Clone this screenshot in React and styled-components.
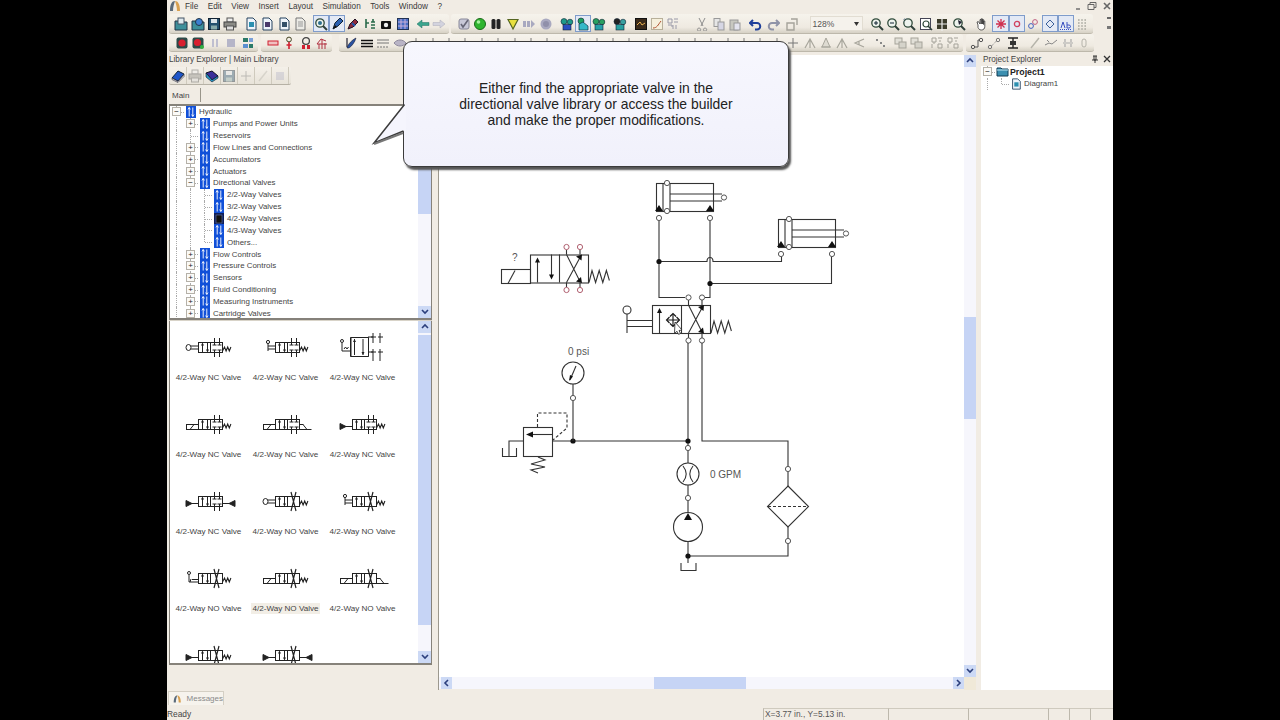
import React from "react";
import styled, { createGlobalStyle } from "styled-components";

const GlobalStyle = createGlobalStyle`
  html, body { margin: 0; padding: 0; background: #000; }
  body { font-family: "Liberation Sans", Arial, sans-serif; overflow: hidden; }
`;

const Frame = styled.div`
  position: relative;
  width: 946px;
  height: 720px;
  margin-left: 167px;
  background: #f1ece4;
  display: flex;
  flex-direction: column;
  overflow: hidden;
  color: #333;
  font-size: 8px;
`;

const MenuBar = styled.div`
  height: 14px;
  display: flex;
  align-items: center;
  padding-left: 2px;
  padding-bottom: 2px;
  box-sizing: border-box;
  font-size: 8.2px;
  color: #3a3a3a;
`;
const MenuItems = styled.div`
  display: flex;
  gap: 9.5px;
  margin-left: 4px;
`;
const WindowButtons = styled.div`
  margin-left: auto;
  display: flex;
  gap: 6px;
  padding-right: 2px;
`;

const ToolRow = styled.div`
  height: ${(p) => p.$h}px;
  display: flex;
  align-items: center;
  padding-left: 2px;
  position: relative;
`;
const Band = styled.div`
  display: flex;
  align-items: center;
  height: 100%;
  box-sizing: border-box;
  padding-left: ${(p) => p.$pad || 0}px;
  padding-right: ${(p) => p.$end || 2}px;
  margin-left: ${(p) => p.$ml || 0}px;
  background: linear-gradient(#f6f3ec, #efeae1 70%, #d6d1c5);
  border-bottom: 1px solid #bdb8ab;
  border-radius: 3px;
`;
const Group = styled.div`
  display: flex;
  margin-left: ${(p) => p.$gap || 0}px;
`;
const Tool = styled.span`
  width: 16.4px;
  height: 17px;
  box-sizing: border-box;
  display: flex;
  align-items: center;
  justify-content: center;
  border: 1px solid ${(p) => (p.$active ? "#7f9ccb" : "transparent")};
  background: ${(p) => (p.$active ? "#e3e9f5" : "transparent")};
  & > svg {
    opacity: ${(p) => (p.$off ? 0.45 : 1)};
  }
`;
const ZoomCombo = styled.div`
  width: 53px;
  height: 15px;
  margin-left: 9px;
  background: #f5f2ec;
  border: 1px solid #e2ddd2;
  box-sizing: border-box;
  display: flex;
  align-items: center;
  justify-content: space-between;
  padding: 0 3px 0 2px;
  font-size: 8.5px;
  color: #555;
`;
const Grip = styled.div`
  position: absolute;
  right: 2px;
  top: 3px;
  width: 4px;
  height: 12px;
  border-top: 2px dotted #666;
  border-bottom: 3px solid #777;
  box-sizing: border-box;
`;

const Body = styled.div`
  flex: 1;
  min-height: 0;
  display: flex;
`;

const LeftPanel = styled.div`
  width: 265px;
  display: flex;
  flex-direction: column;
  padding-left: 2px;
  box-sizing: border-box;
`;
const PanelTitle = styled.div`
  height: ${(p) => p.$h || 15}px;
  flex: none;
  font-size: 8.2px;
  color: #444;
  display: flex;
  align-items: center;
  justify-content: space-between;
  padding-left: ${(p) => p.$pad || 0}px;
`;
const ExplorerTools = styled.div`
  height: 18px;
  width: 122px;
  display: flex;
  align-items: center;
  padding-left: 1px;
  background: linear-gradient(#f4f0e9, #e8e3d9);
  border-bottom: 1px solid #b6b1a5;
  box-sizing: border-box;
  border-radius: 2px;
`;
const ExplorerTool = styled.span`
  width: 17px;
  height: 17px;
  display: flex;
  align-items: center;
  justify-content: center;
  border-right: 1px solid #cfcabd;
  box-sizing: border-box;
  & > svg {
    opacity: ${(p) => (p.$off ? 0.4 : 1)};
  }
`;
const Tabs = styled.div`
  height: 19px;
  display: flex;
  align-items: flex-end;
`;
const Tab = styled.div`
  height: 14px;
  width: 32px;
  margin-bottom: 2px;
  padding-left: 3px;
  line-height: 15px;
  box-sizing: border-box;
  border-right: 1px solid #99958a;
  color: #444;
`;
const TreeBox = styled.div`
  height: 214px;
  display: flex;
  background: #fff;
  border: 1px solid #86827a;
  border-bottom: none;
  border-top: 2px solid #86827a;
  box-sizing: border-box;
  overflow: hidden;
`;
const TreeList = styled.div`
  flex: 1;
  overflow: hidden;
`;
const TreeRow = styled.div`
  height: 11.85px;
  display: flex;
  align-items: center;
  white-space: nowrap;
  color: #444;
  font-size: 7.9px;
`;
const Indent = styled.span`
  width: 14px;
  height: 100%;
  flex: none;
  position: relative;
  &::before {
    content: "";
    position: absolute;
    left: 6px;
    top: 0;
    bottom: 0;
    border-left: 1px dotted #aaa;
  }
`;
const Expander = styled.span`
  width: 14px;
  height: 100%;
  flex: none;
  position: relative;
  display: flex;
  align-items: center;
  justify-content: center;
  &::before {
    content: "";
    position: absolute;
    left: 6px;
    top: 0;
    bottom: ${(p) => (p.$last ? "50%" : "0")};
    border-left: 1px dotted #aaa;
  }
  &::after {
    content: "";
    position: absolute;
    left: 7px;
    right: 0;
    top: 50%;
    border-top: 1px dotted #aaa;
  }
`;
const PlusBox = styled.span`
  position: relative;
  z-index: 1;
  width: 7px;
  height: 7px;
  margin-right: 1px;
  border: 1px solid #b5b1a8;
  background: #fbfaf7;
  font-size: 8px;
  line-height: 7px;
  text-align: center;
  color: #222;
`;
const IconCell = styled.span`
  width: 14px;
  flex: none;
  display: flex;
  justify-content: center;
`;
const TreeLabel = styled.span`
  margin-left: 1px;
  font-weight: ${(p) => (p.$bold ? 700 : 400)};
  font-size: ${(p) => (p.$bold ? "8.8px" : "inherit")};
  color: ${(p) => (p.$bold ? "#222" : "inherit")};
`;

const Splitter = styled.div`
  height: 3px;
  background: #85817a;
  border-bottom: 1px solid #d8d3c8;
  box-sizing: border-box;
`;
const LibBox = styled.div`
  height: 344px;
  display: flex;
  background: #fff;
  border-left: 1px solid #86827a;
  border-right: 1px solid #86827a;
  border-bottom: 2px solid #86827a;
  box-sizing: border-box;
  overflow: hidden;
`;
const LibGrid = styled.div`
  flex: 1;
  display: grid;
  grid-template-columns: repeat(3, 77px);
  grid-auto-rows: 77px;
  padding-top: 4px;
  overflow: hidden;
`;
const LibCell = styled.div`
  display: flex;
  flex-direction: column;
  align-items: center;
`;
const LibIcon = styled.div`
  height: 30px;
  margin-top: 7px;
  display: flex;
  align-items: center;
`;
const LibLabel = styled.div`
  margin-top: 10px;
  padding: 1px 1px;
  font-size: 8.1px;
  color: #444;
  white-space: nowrap;
  background: ${(p) => (p.$hot ? "#f2eee6" : "transparent")};
`;

const VBar = styled.div`
  width: ${(p) => p.$w || 13}px;
  flex: none;
  display: flex;
  flex-direction: column;
  background: #f6f6fc;
`;
const HBar = styled.div`
  flex: 1;
  height: 12px;
  display: flex;
  background: #f6f6fc;
  padding-left: 2px;
`;
const ArrowBtn = styled.div`
  flex: none;
  width: ${(p) => (p.$h ? "11px" : "auto")};
  height: ${(p) => (p.$h ? "auto" : "12px")};
  background: #ccd9f5;
  display: flex;
  align-items: center;
  justify-content: center;
`;
const Thumb = styled.div`
  flex: none;
  height: ${(p) => p.$size}px;
  margin-top: ${(p) => p.$at}px;
  background: #c6d4f5;
`;
const HThumb = styled.div`
  flex: none;
  width: ${(p) => p.$size}px;
  margin-left: ${(p) => p.$at}px;
  background: #c6d4f5;
`;
const BarFill = styled.div`
  flex: 1;
`;

const Main = styled.div`
  width: 538px;
  margin-left: 6px;
  margin-top: 3px;
  display: flex;
  flex-direction: column;
  border-left: 1px solid #9c988e;
  box-sizing: border-box;
`;
const CanvasRow = styled.div`
  flex: 1;
  min-height: 0;
  display: flex;
`;
const Canvas = styled.div`
  flex: 1;
  background: #fff;
  overflow: hidden;
  & > svg {
    display: block;
  }
`;
const BottomRow = styled.div`
  display: flex;
`;
const Corner = styled.div`
  width: 12px;
  height: 13px;
  background: #f0e9d8;
`;

const RightPanel = styled.div`
  width: 132px;
  margin-left: 5px;
  display: flex;
  flex-direction: column;
  padding-top: 1px;
`;
const RightTree = styled.div`
  flex: 1;
  background: #fff;
`;
const CloseBits = styled.span`
  display: flex;
  gap: 4px;
  padding-right: 2px;
`;

const MessagesBar = styled.div`
  height: 18px;
  padding: 1px 0 0 1px;
  box-sizing: border-box;
`;
const MessagesTab = styled.div`
  width: 56px;
  height: 14px;
  display: flex;
  align-items: center;
  gap: 5px;
  padding-left: 4px;
  box-sizing: border-box;
  border: 1px solid #d4cfc4;
  border-bottom: none;
  background: #f6f3ed;
  color: #8a8a8a;
`;
const StatusBar = styled.div`
  height: 12px;
  display: flex;
  align-items: center;
  color: #444;
  font-size: 8.4px;
`;
const StatusText = styled.div`
  width: 596px;
`;
const StatusPane = styled.div`
  width: ${(p) => p.$w}px;
  height: 100%;
  box-sizing: border-box;
  border-left: 1px solid #bdb8ac;
  border-top: 1px solid #cfcabe;
  padding-left: 1px;
  line-height: 11px;
  color: #555;
  font-size: 8.4px;
  white-space: nowrap;
`;

const Callout = styled.div`
  position: absolute;
  left: 236px;
  top: 41px;
  width: 386px;
  height: 126px;
  box-sizing: border-box;
  border: 1.5px solid #3b3b3b;
  border-radius: 9px;
  background: linear-gradient(#f7f7fe, #f1f1fb);
  box-shadow: 2px 3px 2px #555;
  display: flex;
  align-items: center;
  justify-content: center;
  text-align: center;
  font-size: 13.9px;
  line-height: 16px;
  color: #222;
`;
const CalloutTail = styled.svg`
  position: absolute;
  left: 206px;
  top: 100px;
  overflow: visible;
`;

const I = ({ name, size = 14 }) => (
  <svg width={size} height={size} viewBox="0 0 14 14">
    {G[name] || G.misc}
  </svg>
);

const dots = (c1, c2, c3) => (
  <>
    <circle cx="4" cy="4.5" r="3" fill={c1} stroke="#123" strokeWidth=".6" />
    <circle cx="10" cy="5" r="2.8" fill={c2} stroke="#123" strokeWidth=".6" />
    <rect x="3" y="7.5" width="8" height="5.5" fill={c3} stroke="#123" strokeWidth=".6" />
  </>
);
const lens = (inner) => (
  <>
    <circle cx="6" cy="6" r="4.2" fill="#eef3ee" stroke="#2f4a3a" strokeWidth="1.3" />
    <line x1="9" y1="9" x2="13" y2="13" stroke="#2f3f3a" strokeWidth="2" />
    {inner}
  </>
);
const docShape = (c) => (
  <>
    <path d="M3 1h6l3 3v9H3z" fill="#eef4fb" stroke="#27435f" />
    <rect x="5" y="5" width="5" height="5" fill={c} />
  </>
);

const G = {
  open: (
    <>
      <path d="M1 4h5l1 1h6v8H1z" fill="#3d8f9a" stroke="#234" />
      <rect x="4" y="1" width="6" height="6" fill="#dfe9ee" stroke="#456" />
    </>
  ),
  web: (
    <>
      <path d="M1 4h5l1 1h6v8H1z" fill="#3d8f9a" stroke="#234" />
      <circle cx="8" cy="5" r="3.5" fill="#3d7fd0" stroke="#234" />
    </>
  ),
  save: (
    <>
      <rect x="1.5" y="1.5" width="11" height="11" fill="#24506e" stroke="#123" />
      <rect x="4" y="2" width="6" height="4" fill="#dfe6ea" />
      <rect x="4" y="8.5" width="6" height="4" fill="#8aa" />
    </>
  ),
  book: (
    <>
      <path d="M1 9l6-7 6 3-6 7z" fill="#1f55c8" stroke="#123" />
      <path d="M1 9l6 3.5 6-7v2l-6 6-6-3z" fill="#e8e8f0" stroke="#223" strokeWidth=".6" />
    </>
  ),
  book2: (
    <>
      <path d="M1 4l6-2 6 5-6 4z" fill="#3a2f9a" stroke="#112" />
      <path d="M1 4v4l6 5 6-4V7l-6 4z" fill="#2a9ac8" stroke="#112" strokeWidth=".6" />
    </>
  ),
  print: (
    <>
      <rect x="4" y="1" width="6" height="4" fill="#eee" stroke="#555" />
      <rect x="1" y="5" width="12" height="5" fill="#8b8b86" stroke="#444" />
      <rect x="3.5" y="9" width="7" height="4" fill="#ddd" stroke="#555" />
    </>
  ),
  d1: docShape("#2b8fb0"),
  d2: docShape("#4a3a6a"),
  d3: docShape("#33506a"),
  d4: (
    <>
      <path d="M3 1h6l3 3v9H3z" fill="#ecebe6" stroke="#777" />
      <path d="M5 5h5M5 7h5M5 9h5" stroke="#999" />
    </>
  ),
  zoomA: lens(<circle cx="6" cy="6" r="2" fill="#2d6f8f" />),
  arrowA: (
    <>
      <path d="M3 12l2-6 5-5 3 3-5 5z" fill="#2a5fb0" stroke="#123" />
      <path d="M3 12l2-4 2 2z" fill="#111" />
    </>
  ),
  pen: (
    <>
      <path d="M2 12l2-5 5-5 3 3-5 5z" fill="#8e2a3a" stroke="#212" />
      <path d="M6 6l3 3" stroke="#25a" strokeWidth="2" />
    </>
  ),
  node: (
    <path d="M3 2v4h3M3 6v5M10 2v3M8 5h4M8 8h4M8 11h4" stroke="#2a6a4a" strokeWidth="1.6" fill="none" />
  ),
  cam: (
    <>
      <rect x="2" y="4" width="10" height="8" rx="1" fill="#111" />
      <circle cx="7" cy="8" r="2.2" fill="#eee" />
    </>
  ),
  grid: (
    <>
      <rect x="1.5" y="1.5" width="11" height="11" fill="#4a6fc4" stroke="#235" />
      <path d="M5 2v10M9 2v10M2 5h10M2 9h10" stroke="#c9b0d8" />
    </>
  ),
  back: <path d="M1 7l5-4v2.5h7v3H6V11z" fill="#3aa58d" stroke="#1f6f60" strokeWidth=".5" />,
  fwd: <path d="M13 7L8 3v2.5H1v3h7V11z" fill="#d3d3de" stroke="#aab" strokeWidth=".5" />,
  check: (
    <>
      <rect x="2" y="2" width="10" height="10" rx="2" fill="#c8c8d8" stroke="#889" />
      <path d="M4 7l2 3 5-7" stroke="#667" strokeWidth="1.6" fill="none" />
    </>
  ),
  ball: (
    <>
      <circle cx="7" cy="7" r="5.5" fill="#2fb52f" stroke="#1a6a1a" />
      <circle cx="5.5" cy="5" r="1.8" fill="#a8f0a0" />
    </>
  ),
  pause: (
    <>
      <rect x="2.5" y="2" width="4" height="10" rx="1.5" fill="#222" />
      <rect x="7.5" y="2" width="4" height="10" rx="1.5" fill="#222" />
    </>
  ),
  tri: <path d="M2 2.5h10L7 12z" fill="#e8e040" stroke="#556622" strokeWidth="1.2" />,
  step: <path d="M1 4h3v6H1zM5 4h3v6H5zM9 3l4 4-4 4z" fill="#a9a9c0" />,
  stopc: (
    <>
      <circle cx="7" cy="7" r="5.5" fill="#a9a9c0" />
      <circle cx="7" cy="7" r="3" fill="#9090aa" />
    </>
  ),
  c1: dots("#1f9a8a", "#1f9a8a", "#2a4fc0"),
  c2: (
    <>
      <circle cx="5" cy="4" r="3" fill="#1fa060" stroke="#123" strokeWidth=".6" />
      <path d="M3 7l4-2 5 4v4H3z" fill="#35b8c8" stroke="#134" strokeWidth=".7" />
    </>
  ),
  c3: dots("#2aa060", "#2aa060", "#27a0a8"),
  c4: dots("#222", "#3aa0a0", "#28a0a0"),
  chart: (
    <>
      <rect x="1.5" y="1.5" width="11" height="11" fill="#3a2a1a" stroke="#111" />
      <path d="M3 8l3-3 2 3 3-2" stroke="#e8b050" fill="none" />
    </>
  ),
  chart2: (
    <>
      <rect x="1.5" y="1.5" width="11" height="11" fill="#f6f0dc" stroke="#b8b09a" />
      <path d="M3 11c4 0 5-3 8-7" stroke="#b05030" fill="none" />
    </>
  ),
  tbl: <path d="M2 2h4v4H2zM8 2h4M8 5h4M7 8v4M10 8v4M2 8h4v2" stroke="#9a9aa8" fill="none" />,
  cut: <path d="M4 1l4 8M10 1L6 9M4 11a1.6 1.6 0 1 0 .1 0M10 11a1.6 1.6 0 1 0 .1 0" stroke="#8d8d8d" fill="none" />,
  copy: (
    <>
      <rect x="2" y="1.5" width="6" height="8" fill="#e6e6e6" stroke="#999" />
      <rect x="6" y="5" width="6" height="8" fill="#d6d6e4" stroke="#999" />
    </>
  ),
  paste: (
    <>
      <rect x="2" y="3" width="8" height="10" fill="#c8c8c0" stroke="#999" />
      <rect x="6" y="6" width="6" height="7" fill="#e4e4ee" stroke="#999" />
    </>
  ),
  undo: <path d="M4 3L1 6l3 3M2 6h6a3.2 3.2 0 0 1 0 6.5H6" stroke="#1f3f9a" strokeWidth="2" fill="none" />,
  redo: <path d="M10 3l3 3-3 3M12 6H6a3.2 3.2 0 0 0 0 6.5h2" stroke="#8f93a8" strokeWidth="2" fill="none" />,
  group: <path d="M2 6h7v7H2zM6 2h6v6" stroke="#a5a39a" strokeWidth="1.4" fill="none" />,
  zin: lens(<path d="M4 6h4M6 4v4" stroke="#123" />),
  zout: lens(<path d="M4 6h4" stroke="#123" />),
  zarea: lens(<path d="M2 2h3M2 2v3" stroke="#789" strokeDasharray="1 1" />),
  zpage: (
    <>
      <rect x="1.5" y="1.5" width="10" height="11" fill="#fff" stroke="#445" />
      <circle cx="7" cy="7" r="3" fill="none" stroke="#2f4a3a" strokeWidth="1.2" />
      <path d="M9 9l4 4" stroke="#2f3f3a" strokeWidth="1.6" />
    </>
  ),
  zfit: (
    <>
      <rect x="2" y="2" width="10" height="10" fill="#3a3a2a" />
      <path d="M7 0v14M0 7h14" stroke="#eee" strokeWidth="1.2" />
    </>
  ),
  zsel: lens(<path d="M6 3l1 5 3-3z" fill="#223" />),
  hand: (
    <path
      d="M3 8L2 5l1.4-.4L5 7V2.6h1.2V7V1.8h1.2V7V2.6h1.2V7.5V4h1.2v5.5c0 2-1.2 3.5-3.4 3.5-2 0-2.6-1-3.4-2.5z"
      fill="#fff"
      stroke="#333"
      strokeWidth=".8"
    />
  ),
  snap: <path d="M7 2v10M2 7h10M3.5 3.5l7 7M10.5 3.5l-7 7" stroke="#d03050" strokeWidth="1.3" />,
  redc: <circle cx="7" cy="7" r="2.6" fill="none" stroke="#d04060" strokeWidth="1.3" />,
  multi: (
    <>
      <circle cx="9" cy="5" r="2.4" fill="none" stroke="#c06080" />
      <circle cx="5" cy="9" r="2.4" fill="none" stroke="#4060c0" />
    </>
  ),
  dia: <path d="M7 3l4 4-4 4-4-4z" fill="none" stroke="#3a5f9a" />,
  abc: (
    <>
      <path d="M2 11l2-6 2 6M8 5v6h2c2 0 2-3 0-3H8" stroke="#3a50c0" fill="none" />
      <path d="M1 12.5h12" stroke="#3a50c0" strokeDasharray="1 1" />
    </>
  ),
  dotgrid: <path d="M3 3h9M3 6h9M3 9h9M3 12h9" stroke="#a9a9a0" strokeWidth="1.6" strokeDasharray="1.6 1.6" />,
  rec: (
    <>
      <rect x="1.5" y="1.5" width="11" height="11" rx="2" fill="#2c4a48" />
      <circle cx="7" cy="7" r="3.6" fill="#d81f2f" />
    </>
  ),
  rec2: (
    <>
      <rect x="1.5" y="1.5" width="11" height="11" rx="2" fill="#2c4a48" />
      <circle cx="6.5" cy="6.5" r="3.6" fill="#d81f2f" />
      <circle cx="11" cy="11" r="2" fill="#30b040" />
    </>
  ),
  gpause: <path d="M4 3h2v8H4zM8 3h2v8H8z" fill="#bfbfd0" />,
  gstop: <rect x="3" y="3" width="8" height="8" fill="#b5b5c8" />,
  blocks: (
    <>
      <rect x="2" y="2" width="5" height="4" fill="#2a7a68" />
      <rect x="8" y="2" width="4" height="4" fill="#7aa0d8" />
      <rect x="2" y="8" width="5" height="4" fill="#5a8fd0" />
      <rect x="8" y="8" width="4" height="4" fill="#2a7a68" />
    </>
  ),
  minus: <rect x="2" y="5" width="10" height="4" fill="#f0c0c0" stroke="#d02030" />,
  pin: (
    <>
      <circle cx="7" cy="3.5" r="2.4" fill="none" stroke="#442" />
      <path d="M7 6v7M4.5 9h5" stroke="#d02030" strokeWidth="1.6" />
    </>
  ),
  meter: (
    <>
      <circle cx="7" cy="5" r="3.4" fill="none" stroke="#444" strokeWidth="1.3" />
      <path d="M3 13V9h3v4zM8 13V9h3v4z" fill="#d02030" />
    </>
  ),
  elec: <path d="M2 8l4-5 5 2M7 3v10M4 8v5M10 7v6M2 8h10" stroke="#b03040" fill="none" />,
  brush: (
    <>
      <path d="M3 2v9" stroke="#223" strokeWidth="1.2" />
      <path d="M3 12c1-4 5-8 9-10-1 4-4 8-7 10z" fill="#2a52a0" stroke="#112" strokeWidth=".5" />
    </>
  ),
  lines: <path d="M1 4.5h12M1 7.5h12M1 10.5h12" stroke="#111" strokeWidth="1.6" />,
  lines2: <path d="M1 4h12M1 7h12M2 10v2M5 10v2M8 10v2M11 10v2" stroke="#777" />,
  eye: <path d="M1 7c3-4 9-4 12 0-3 4-9 4-12 0z" fill="#b9b4c6" stroke="#8f8a9c" />,
  misc: <path d="M2 7h10M7 2v10" stroke="#777" />,
  peak: <path d="M2 12l5-9 5 9M7 3v9" stroke="#a8a69c" fill="none" strokeWidth="1.2" />,
  peak2: <path d="M2 11h10M7 2l4 9H3z" stroke="#a8a69c" fill="#dedbd2" />,
  flag: <path d="M12 3L3 7l9 4M7 5v4" stroke="#a8a69c" fill="none" strokeWidth="1.2" />,
  spread: <path d="M3 4h2M7 7h2M10 10h2" stroke="#888" strokeWidth="2" />,
  stack: (
    <>
      <rect x="2" y="2" width="7" height="6" fill="#e2e0d8" stroke="#a5a39a" />
      <rect x="6" y="6" width="7" height="6" fill="#d5d3ca" stroke="#a5a39a" />
    </>
  ),
  align: <path d="M2 2h4v4H2zM8 8h4v4H8zM8 2h4M2 8v4M10 4v2M4 8V6" stroke="#a5a39a" fill="none" />,
  wire: (
    <>
      <circle cx="3" cy="11" r="1.7" fill="none" stroke="#555" />
      <circle cx="11" cy="4" r="1.7" fill="none" stroke="#555" />
      <path d="M4.5 11H8V4h1.5" stroke="#555" fill="none" />
    </>
  ),
  wire2: (
    <>
      <circle cx="3" cy="11" r="1.7" fill="none" stroke="#777" />
      <circle cx="11" cy="4" r="1.7" fill="none" stroke="#777" />
      <path d="M4.5 10L9.5 5" stroke="#777" strokeDasharray="1 1" />
    </>
  ),
  pipe: (
    <>
      <path d="M2 2h10M2 12h10M7 2v3M7 9v3" stroke="#222" strokeWidth="1.4" />
      <rect x="4" y="5" width="6" height="4" fill="#333" />
    </>
  ),
  slash: <path d="M3 12l8-10" stroke="#b5b3aa" strokeWidth="1.4" />,
  zig: <path d="M1 9l4-2 3 1 5-4M3 4l2 2" stroke="#888" fill="none" />,
  cross: <path d="M2 7h10M4 3v3M10 3v3M4 8v3M10 8v3" stroke="#aaa" strokeWidth="1.2" />,
  rect0: <rect x="5" y="3" width="4" height="8" rx="2" fill="none" stroke="#b5b3aa" />,
};

const renderGroups = (groups) =>
  groups.map(({ gap, items, active = [], off = [] }, i) => (
    <Group key={i} $gap={gap}>
      {items.map((n, j) => (
        <Tool key={j} $active={active.includes(n)} $off={off.includes(n)}>
          <I name={n} />
        </Tool>
      ))}
    </Group>
  ));

const row1a = [
  { items: ["open", "web", "save", "print"] },
  { gap: 4, items: ["d1", "d2", "d3", "d4"] },
  { gap: 4.4, items: ["zoomA", "arrowA", "pen", "node", "cam", "grid"], active: ["zoomA", "arrowA"] },
  { gap: 3.6, items: ["back", "fwd"] },
];
const row1b = [
  { items: ["check", "ball", "pause", "tri", "step", "stopc"] },
  { gap: 4.6, items: ["c1", "c2", "c3"], active: ["c2"] },
  { gap: 3.8, items: ["c4"] },
  { gap: 4.6, items: ["chart", "chart2", "tbl"] },
  { gap: 12.8, items: ["cut", "copy", "paste"] },
  { gap: 4.8, items: ["undo", "redo"] },
  { gap: 3.2, items: ["group"] },
];
const row1c = [
  { gap: 5.8, items: ["zin", "zout", "zarea", "zpage", "zfit", "zsel"] },
  { gap: 6.6, items: ["hand"] },
  { gap: 2.6, items: ["snap", "redc", "multi"], active: ["snap", "redc"] },
  { items: ["dia", "abc"], active: ["dia", "abc"] },
  { items: ["dotgrid"] },
];
const row2a = [{ items: ["rec", "rec2", "gpause", "gstop", "blocks"] }];
const row2b = [{ items: ["minus", "pin", "meter", "elec"] }];
const row2c = [
  { items: ["brush", "lines", "lines2", "eye"] },
  { items: Array.from({ length: 24 }, () => "misc") },
  { items: ["peak", "peak2", "peak", "flag"] },
  { gap: 4.4, items: ["spread"] },
  { gap: 3.6, items: ["stack", "stack"] },
  { gap: 4.2, items: ["align", "align"] },
];
const row2d = [
  { items: ["wire", "wire2"] },
  { gap: 3.2, items: ["pipe"] },
  { gap: 5.6, items: ["slash", "zig", "cross", "rect0"] },
];

const AppLogo = () => (
  <svg width="12" height="12" viewBox="0 0 12 12">
    <path d="M6 1C3 1 1 4 1 11h3c0-4 1-7 2-10z" fill="#5a6a7a" />
    <path d="M6 1c3 0 5 3 5 10H8C8 7 7 4 6 1z" fill="#d8a050" />
  </svg>
);

const FolderIcon = () => (
  <svg width="13" height="11" viewBox="0 0 13 11">
    <path d="M1 2h4l1 1h6v7H1z" fill="#3b8fb0" stroke="#123c55" />
    <path d="M1 4h11" stroke="#bfe6f2" />
  </svg>
);

const LibTreeIcon = ({ dark }) => (
  <svg width="10" height="12" viewBox="0 0 10 12">
    <rect width="10" height="12" fill={dark ? "#0e1e5a" : "#1150d8"} />
    {dark ? (
      <rect x="2" y="2" width="6" height="8" fill="#111" stroke="#6a7ab0" strokeWidth=".6" />
    ) : (
      <path d="M3.2 1.5v9M6.8 1.5v9M2 3.4l1.2-1.8 1.2 1.8M5.6 8.6l1.2 1.8L8 8.6" stroke="#fff" fill="none" strokeWidth=".9" />
    )}
  </svg>
);

const tree = [
  { label: "Hydraulic", level: 0, exp: "-" },
  { label: "Pumps and Power Units", level: 1, exp: "+" },
  { label: "Reservoirs", level: 1 },
  { label: "Flow Lines and Connections", level: 1, exp: "+" },
  { label: "Accumulators", level: 1, exp: "+" },
  { label: "Actuators", level: 1, exp: "+" },
  { label: "Directional Valves", level: 1, exp: "-" },
  { label: "2/2-Way Valves", level: 2 },
  { label: "3/2-Way Valves", level: 2 },
  { label: "4/2-Way Valves", level: 2, dark: true },
  { label: "4/3-Way Valves", level: 2 },
  { label: "Others...", level: 2, last: true },
  { label: "Flow Controls", level: 1, exp: "+" },
  { label: "Pressure Controls", level: 1, exp: "+" },
  { label: "Sensors", level: 1, exp: "+" },
  { label: "Fluid Conditioning", level: 1, exp: "+" },
  { label: "Measuring Instruments", level: 1, exp: "+" },
  { label: "Cartridge Valves", level: 1, exp: "+" },
];

const Chevron = ({ dir }) => {
  const d = { up: "M1 5l3-3 3 3", down: "M1 2l3 3 3-3", left: "M5 1L2 4l3 3", right: "M2 1l3 3-3 3" }[dir];
  return (
    <svg width="8" height="8" viewBox="0 0 8 8">
      <path d={d} fill="none" stroke="#2c3f7c" strokeWidth="1.6" />
    </svg>
  );
};

const Valve = ({ left, right, no }) => {
  const ink = "#222";
  return (
    <svg width="64" height="26" viewBox="0 0 64 26" fill="none" stroke={ink} strokeWidth="1">
      <rect x="21.5" y="8.5" width="24" height="10" />
      <path d="M33.5 8.5v10" />
      <path d="M25.5 18V10M30.5 9v8" />
      <path d="M24 11.5l1.5-3 1.5 3zM29 15.5l1.5 3 1.5-3z" fill={ink} stroke="none" />
      {no ? (
        <path d="M37 4l5 19M42 4l-5 19" strokeWidth="1.2" />
      ) : (
        <path d="M37.5 4v7M35.5 11h4M42.5 4v7M40.5 11h4M37.5 16v7M35.5 16h4M42.5 16v7M40.5 16h4" />
      )}
      {left === "lever" && (
        <>
          <ellipse cx="11.5" cy="13.5" rx="2.5" ry="3" />
          <path d="M14 12h7.5M14 15h7.5" />
        </>
      )}
      {left === "push" && (
        <>
          <circle cx="14" cy="8" r="1.6" />
          <path d="M14 10v7M14 12h7.5M14 15h7.5" />
        </>
      )}
      {left === "sol" && (
        <>
          <rect x="9.5" y="13.5" width="12" height="5" />
          <path d="M13 18.5l4-5" />
        </>
      )}
      {left === "pilot" && (
        <>
          <path d="M9.5 15.5h12" />
          <path d="M9 12.5v6l6-3z" fill={ink} stroke={ink} />
        </>
      )}
      {left === "pedal" && (
        <>
          <circle cx="12" cy="8" r="1.5" />
          <path d="M12 10v7h9.5M15 14.5h6.5M13 17l1-3" />
        </>
      )}
      {right === "spring" && <path d="M45.5 17l2-4 1.6 4 1.6-4 1.6 4 1.6-4" strokeWidth="1.1" />}
      {right === "solR" && <path d="M45.5 18.5h12M45.5 13.5h4M49 13.5l4 5" />}
      {right === "pilotR" && (
        <>
          <path d="M45.5 15.5h12" />
          <path d="M58 12.5v6l-6-3z" fill={ink} stroke={ink} />
        </>
      )}
    </svg>
  );
};

const TallValve = () => (
  <svg width="64" height="30" viewBox="0 0 64 30" fill="none" stroke="#222" strokeWidth="1">
    <path d="M19.5 5.5h18v19h-18zM37.5 5.5v19M20 5.5v19" />
    <path d="M23.5 7v16M32 7v16" />
    <path d="M22 10l1.5-3 1.5 3zM30.5 20l1.5 3 1.5-3z" fill="#222" stroke="none" />
    <path d="M42 1v10M40 5h5M49 1v10M47 5h5M42 17v12M40 20h5M49 17v12M47 20h5M37 5h5M37 20h5" />
    <circle cx="11" cy="9" r="1.5" />
    <path d="M11 11v8h8.5M13 17l1.5-2 1.5 2 1.5-2" />
  </svg>
);

const library = [
  { left: "lever", right: "spring", label: "4/2-Way NC Valve" },
  { left: "push", right: "spring", label: "4/2-Way NC Valve" },
  { tall: true, label: "4/2-Way NC Valve" },
  { left: "sol", right: "spring", label: "4/2-Way NC Valve" },
  { left: "sol", right: "solR", label: "4/2-Way NC Valve" },
  { left: "pilot", right: "spring", label: "4/2-Way NC Valve" },
  { left: "pilot", right: "pilotR", label: "4/2-Way NC Valve" },
  { left: "lever", right: "spring", no: true, label: "4/2-Way NO Valve" },
  { left: "push", right: "spring", no: true, label: "4/2-Way NO Valve" },
  { left: "pedal", right: "spring", no: true, label: "4/2-Way NO Valve" },
  { left: "sol", right: "spring", no: true, label: "4/2-Way NO Valve", hot: true },
  { left: "sol", right: "solR", no: true, label: "4/2-Way NO Valve" },
  { left: "pilot", right: "spring", no: true },
  { left: "pilot", right: "pilotR", no: true },
];

const Port = ({ x, y, c = "#555" }) => <circle cx={x} cy={y} r="2.6" fill="#fff" stroke={c} strokeWidth="1" />;
const Junction = ({ x, y }) => <circle cx={x} cy={y} r="2.6" fill="#111" stroke="none" />;

const Cylinder = ({ x, y }) => (
  <g>
    <rect x={x + 0.5} y={y + 0.5} width="57" height="28" />
    <path d={`M${x + 7} ${y}v28M${x + 14} ${y}v28`} />
    <path d={`M${x + 14} ${y + 11}h52M${x + 14} ${y + 18}h52`} />
    <path d={`M${x - 1} ${y + 28}l4 -6 4 6z M${x + 50} ${y + 28}l4 -6 4 6z`} fill="#111" stroke="none" />
    <Port x={x + 11} y={y} />
    <Port x={x + 11} y={y + 28} />
    <Port x={x + 68} y={y + 14.5} />
    <Port x={x + 3} y={y + 35} />
    <Port x={x + 54} y={y + 35} />
  </g>
);

const FourWay = ({ x, y, port = "#555", arrowDown = true }) => (
  <g>
    <rect x={x + 0.5} y={y + 0.5} width="58" height="28" />
    <path d={`M${x + 29.5} ${y}v28`} />
    <path d={`M${x + 7.5} ${y + 28}V${y + 6}`} />
    <path d={`M${x + 5} ${y + 8}l2.5 -5 2.5 5z`} fill="#111" stroke="none" />
    {arrowDown && (
      <>
        <path d={`M${x + 21.5} ${y}V${y + 22}`} />
        <path d={`M${x + 19} ${y + 20}l2.5 5 2.5 -5z`} fill="#111" stroke="none" />
      </>
    )}
    <path d={`M${x + 36.5} ${y + 28}L${x + 50} ${y + 3}M${x + 36.5} ${y}L${x + 50} ${y + 27}`} />
    <path d={`M${x + 46} ${y + 2}l6 -2 -0.5 6zM${x + 46} ${y + 27}l6 1.5 -1 -6z`} fill="#111" stroke="none" />
    <path d={`M${x + 59} ${y + 28}l3 -12 3.6 12 3.6 -12 3.6 12 3.6 -12 3 10`} />
    <path d={`M${x + 36.5} ${y - 5}v5M${x + 50} ${y - 5}v5M${x + 36.5} ${y + 28}v5M${x + 50} ${y + 28}v5`} />
    <Port x={x + 36.5} y={y - 7.5} c={port} />
    <Port x={x + 50} y={y - 7.5} c={port} />
    <Port x={x + 36.5} y={y + 35.5} c={port} />
    <Port x={x + 50} y={y + 35.5} c={port} />
  </g>
);

const Diagram = () => (
  <svg width="525" height="622" viewBox="439 55 525 622" fill="none" stroke="#333" strokeWidth="1.1">
    <Cylinder x={656} y={183} />
    <Cylinder x={778} y={219} />

    <path d="M659 221V297.5H685M710 221V297.5H705" />
    <path d="M659 261.5H707a3 4 0 0 1 6 0H781.5V257" />
    <path d="M710 283.5H831.5V257" />
    <Junction x={659} y={261.5} />
    <Junction x={710} y={283.5} />

    <rect x="501.5" y="269.5" width="29" height="14" />
    <path d="M508 283.5l7-13" />
    <FourWay x={530} y={254.5} port="#b06070" />

    <FourWay x={652} y={305} arrowDown={false} />
    <path d="M627 314V333M627 320.5H652M627 326.5H652" />
    <circle cx="627" cy="310" r="4" />

    <path d="M688 343V441M702 343V441H788V466M788 472V486" />
    <path d="M553 441H688M688 441V445.5M688 451V463M688 485V495.5M688 501V512" />
    <Junction x={573} y={441} />
    <Junction x={688} y={441} />

    <circle cx="573" cy="373" r="11" />
    <path d="M570 380l6-14" />
    <path d="M569 381l1-6 3 1.5z" fill="#111" stroke="none" />
    <path d="M573 384V395.5M573 401V441" />
    <Port x={573} y={398} />

    <rect x="523.5" y="427.5" width="29" height="29" />
    <path d="M552 434.5H532" />
    <path d="M533 431.5v6l-7-3z" fill="#111" stroke="none" />
    <path d="M537.5 427V413H567V428L553 440" strokeDasharray="3 2" />
    <path d="M523 441H509V456M502.5 448V456.5H516.5V448" />
    <path d="M538 457l7 3-14 4 14 3-14 3 7 3" />

    <Port x={688} y={448} />
    <circle cx="688" cy="474" r="11" />
    <path d="M683 466c4 5 4 11 0 16M693 466c-4 5-4 11 0 16" />
    <Port x={688} y={498} />

    <circle cx="688" cy="527" r="14.5" />
    <path d="M684 520l4-7 4 7z" fill="#111" stroke="none" />
    <path d="M688 541.5V563M681 563V570.5H696V563" />
    <path d="M688 556H788V544M788 538V527" />
    <Junction x={688} y={556} />
    <path d="M788 486l20.5 20.5L788 527l-20.5-20.5z" />
    <path d="M768 506.5H808" strokeDasharray="3 2" />
    <Port x={788} y={469} />
    <Port x={788} y={541} />

    <path d="M673 314v12M667 320h12" stroke="#111" />
    <path d="M670 316.5l3-3 3 3M670 323.5l3 3 3-3M669.5 317l-3 3 3 3M676.5 317l3 3-3 3" stroke="#111" />
    <path d="M675 322l7 8-3 .5 1.5 3-2 .8-1.5-3-2.5 2z" fill="#fff" stroke="#222" strokeWidth=".8" />

    <g fill="#555" stroke="none" fontFamily="Liberation Sans, Arial, sans-serif" fontSize="10">
      <text x="512" y="261">?</text>
      <text x="568" y="355">0 psi</text>
      <text x="710" y="478">0 GPM</text>
    </g>
  </svg>
);

export default function App() {
  return (
    <>
      <GlobalStyle />
      <Frame>
        <MenuBar>
          <AppLogo />
          <MenuItems>
            {["File", "Edit", "View", "Insert", "Layout", "Simulation", "Tools", "Window", "?"].map((m) => (
              <span key={m}>{m}</span>
            ))}
          </MenuItems>
          <WindowButtons>
            <svg width="38" height="10" viewBox="0 0 38 10" fill="none" stroke="#666">
              <path d="M3 8h4" strokeWidth="1.4" />
              <path d="M15 3.5h6v5h-6zM17 3.5V1.5h6v5h-2" />
              <path d="M31 2l6 6M37 2l-6 6" strokeWidth="1.6" />
            </svg>
          </WindowButtons>
        </MenuBar>

        <ToolRow $h={20}>
          <Band $pad={4}>{renderGroups(row1a)}</Band>
          <Band $pad={4.2} $ml={2}>
            {renderGroups(row1b)}
            <ZoomCombo>
              128%
              <svg width="5" height="4" viewBox="0 0 5 4">
                <path d="M0 0h5L2.5 4z" fill="#333" />
              </svg>
            </ZoomCombo>
            {renderGroups(row1c)}
          </Band>
          <Grip />
        </ToolRow>
        <ToolRow $h={18}>
          <Band $pad={4.8}>{renderGroups(row2a)}</Band>
          <Band $pad={3.8} $ml={3}>{renderGroups(row2b)}</Band>
          <Band $pad={3.8} $ml={6.6}>{renderGroups(row2c)}</Band>
          <Band $pad={2.8} $ml={3}>{renderGroups(row2d)}</Band>
        </ToolRow>

        <Body>
          <LeftPanel>
            <PanelTitle>Library Explorer | Main Library</PanelTitle>
            <ExplorerTools>
              <ExplorerTool><I name="book" /></ExplorerTool>
              <ExplorerTool $off><I name="print" /></ExplorerTool>
              <ExplorerTool><I name="book2" /></ExplorerTool>
              <ExplorerTool $off><I name="save" /></ExplorerTool>
              <ExplorerTool $off><I name="misc" /></ExplorerTool>
              <ExplorerTool $off><I name="slash" /></ExplorerTool>
              <ExplorerTool $off><I name="gstop" /></ExplorerTool>
            </ExplorerTools>
            <Tabs>
              <Tab>Main</Tab>
            </Tabs>
            <TreeBox>
              <TreeList>
                {tree.map((t) => (
                  <TreeRow key={t.label}>
                    {t.level >= 1 && <Indent />}
                    {t.level === 2 && <Indent />}
                    <Expander $last={t.last}>{t.exp && <PlusBox>{t.exp === "+" ? "+" : "−"}</PlusBox>}</Expander>
                    <IconCell>
                      <LibTreeIcon dark={t.dark} />
                    </IconCell>
                    <TreeLabel>{t.label}</TreeLabel>
                  </TreeRow>
                ))}
              </TreeList>
              <VBar>
                <Thumb $size={50} $at={58} />
                <BarFill />
                <ArrowBtn>
                  <Chevron dir="down" />
                </ArrowBtn>
              </VBar>
            </TreeBox>
            <Splitter />
            <LibBox>
              <LibGrid>
                {library.map((v, i) => (
                  <LibCell key={i}>
                    <LibIcon>{v.tall ? <TallValve /> : <Valve {...v} />}</LibIcon>
                    {v.label && <LibLabel $hot={v.hot}>{v.label}</LibLabel>}
                  </LibCell>
                ))}
              </LibGrid>
              <VBar>
                <ArrowBtn>
                  <Chevron dir="up" />
                </ArrowBtn>
                <Thumb $size={290} $at={2} />
                <BarFill />
                <ArrowBtn>
                  <Chevron dir="down" />
                </ArrowBtn>
              </VBar>
            </LibBox>
          </LeftPanel>

          <Main>
            <CanvasRow>
              <Canvas>
                <Diagram />
              </Canvas>
              <VBar $w={12}>
                <ArrowBtn>
                  <Chevron dir="up" />
                </ArrowBtn>
                <Thumb $size={102} $at={250} />
                <BarFill />
                <ArrowBtn>
                  <Chevron dir="down" />
                </ArrowBtn>
              </VBar>
            </CanvasRow>
            <BottomRow>
              <HBar>
                <ArrowBtn $h>
                  <Chevron dir="left" />
                </ArrowBtn>
                <HThumb $size={92} $at={202} />
                <BarFill />
                <ArrowBtn $h>
                  <Chevron dir="right" />
                </ArrowBtn>
              </HBar>
              <Corner />
            </BottomRow>
          </Main>

          <RightPanel>
            <PanelTitle $pad={2} $h={13}>
              Project Explorer
              <CloseBits>
                <svg width="20" height="9" viewBox="0 0 20 9" fill="none" stroke="#333">
                  <path d="M2 1h4M3 1v4h2V1M1 5h6M4 5v3" />
                  <path d="M13 1l6 6M19 1l-6 6" strokeWidth="1.3" />
                </svg>
              </CloseBits>
            </PanelTitle>
            <RightTree>
              <TreeRow>
                <Expander $last>
                  <PlusBox>−</PlusBox>
                </Expander>
                <IconCell>
                  <FolderIcon />
                </IconCell>
                <TreeLabel $bold>Project1</TreeLabel>
              </TreeRow>
              <TreeRow>
                <Indent />
                <Expander $last />
                <IconCell>
                  <I name="d1" size={12} />
                </IconCell>
                <TreeLabel>Diagram1</TreeLabel>
              </TreeRow>
            </RightTree>
          </RightPanel>
        </Body>

        <MessagesBar>
          <MessagesTab>
            <AppLogo />
            Messages
          </MessagesTab>
        </MessagesBar>
        <StatusBar>
          <StatusText>Ready</StatusText>
          <StatusPane $w={125}>X=3.77 in., Y=5.13 in.</StatusPane>
          <StatusPane $w={80} />
          <StatusPane $w={80} />
          <StatusPane $w={21} />
          <StatusPane $w={21} />
          <StatusPane $w={23} />
        </StatusBar>

        <Callout>
          <div>
            Either find the appropriate valve in the
            <br />
            directional valve library or access the builder
            <br />
            and make the proper modifications.
          </div>
        </Callout>
        <CalloutTail width="40" height="50" viewBox="0 0 40 50">
          <path d="M31 5L1 43 31 31H33V5z" fill="#f5f5fd" />
          <path d="M31.5 4.5L1 43 30.5 31" fill="none" stroke="#3b3b3b" strokeWidth="1.5" />
          <path d="M1 44l29-11" stroke="#777" strokeWidth="2" fill="none" />
        </CalloutTail>
      </Frame>
    </>
  );
}
